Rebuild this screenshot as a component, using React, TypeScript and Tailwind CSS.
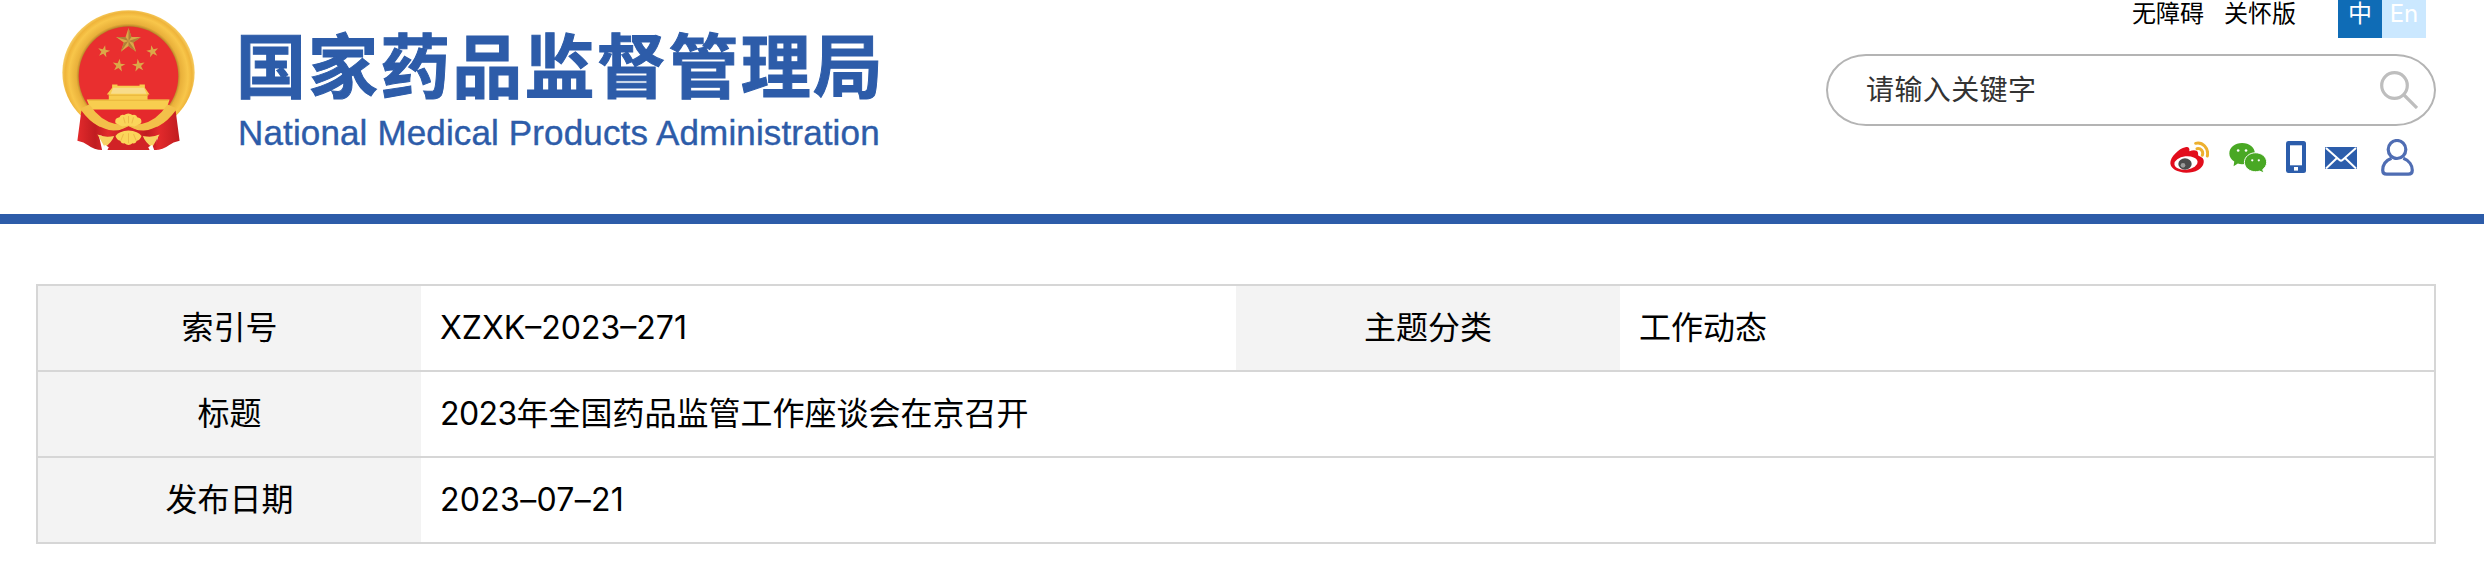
import React from "react";

const star = (cx: number, cy: number, r: number, rot = 0) =>
  Array.from({ length: 10 }, (_, i) => {
    const a = ((i * 36 - 90 + rot) * Math.PI) / 180;
    const q = i % 2 ? r * 0.38 : r;
    return `${(cx + q * Math.cos(a)).toFixed(1)},${(cy + q * Math.sin(a)).toFixed(1)}`;
  }).join(" ");

function Emblem() {
  return (
    <svg viewBox="60 20 410 440" className="mt-[7px] h-[147px] w-[137px] shrink-0" aria-hidden="true">
      <defs>
        <radialGradient id="gold" cx="265" cy="226" r="198" gradientUnits="userSpaceOnUse">
          <stop offset="0.74" stopColor="#b07c26" />
          <stop offset="0.79" stopColor="#e9b03a" />
          <stop offset="0.9" stopColor="#f8c64a" />
          <stop offset="0.96" stopColor="#efb43a" />
          <stop offset="1" stopColor="#f5c95c" />
        </radialGradient>
        <linearGradient id="drape" x1="0" x2="1">
          <stop offset="0" stopColor="#e32a2c" />
          <stop offset="0.35" stopColor="#c01c20" />
          <stop offset="0.6" stopColor="#e32a2c" />
          <stop offset="1" stopColor="#c01c20" />
        </linearGradient>
      </defs>
      <ellipse cx="265" cy="216" rx="198" ry="186" fill="url(#gold)" />
      <circle cx="265" cy="227" r="149" fill="#e92f2f" />
      <g fill="#dba848">
        <polygon points={star(265, 122, 39)} />
        <polygon points={star(191, 153, 19, 12)} />
        <polygon points={star(337, 153, 19, -12)} />
        <polygon points={star(236, 195, 20, 8)} />
        <polygon points={star(295, 195, 20, -8)} />
      </g>
      <g fill="#b07f38">
        <polygon points="265,122 265,83 274,110" />
        <polygon points="265,122 302,110 279,127" />
        <polygon points="265,122 288,154 265,137" />
        <polygon points="265,122 242,154 251,127" />
        <polygon points="265,122 228,110 256,110" />
      </g>
      <path d="M216 252h16v4h66v-4h16v10l14 20h-6v15h66l-10 30H152l-12-30h66v-15h-6l16-20z" fill="#f8cd4f" />
      <path d="M219 262h92l8 18H212z" fill="#f8dc8a" />
      <path d="M206 284h118M146 299h238" stroke="#e8b53c" strokeWidth="3" />
      <path d="M150 328h230q-38 50-115 50t-115-50z" fill="#e5292c" />
      <path d="M180 378h170v70H196z" fill="#d12226" />
      <path d="M124 330l-12 90q20 4 32 14 18 14 42 14l-10-44q40 10 89-12-90 10-141-62z" fill="url(#drape)" />
      <path d="M406 330l12 90q-20 4-32 14-18 14-42 14l10-44q-40 10-89-12 90 10 141-62z" fill="url(#drape)" />
      <path d="M124 322q40 62 96 68 30 0 45-12 15 12 45 12 56-6 96-68l-24-10q-34 50-78 58-26 2-39 0-13 2-39 0-44-8-78-58z" fill="#f3c04a" />
      <path d="M172 402q22 10 50 4-6 18-28 34zM358 402q-22 10-50 4 6 18 28 34z" fill="#f7d263" />
      <path d="M188 448l6-16 12 8-4 8zM342 448l-6-16-12 8 4 8z" fill="#fff" />
      <path d="M226 368q-4-16 12-18 2-10 14-7 12-9 25 0 12-3 14 7 16 2 12 18l-20 10-18-3-18 3z" fill="#fbd55a" />
      <path d="M240 388l25-11 25 11-25 8z" fill="#d82529" />
      <path d="M226 406q10-14 39-16 29 2 39 16-4 12-14 14-4 10-13 8-12 10-24 0-9 2-13-8-10-2-14-14z" fill="#fbd55a" />
      <path d="M265 398v30M250 400l-8 20M280 400l8 20M265 346v22M250 350l5 18M280 350l-5 18" stroke="#edbb48" strokeWidth="3" />
    </svg>
  );
}

function WeiboIcon() {
  return (
    <svg viewBox="60 48 117 99" className="mt-[2px] h-[33px] w-[39px]" aria-hidden="true">
      <path d="M106 67c9-3 14 2 12 12 12-5 24-4 26 4 1 4-1 8 3 10 11 4 16 10 14 20-3 18-24 30-52 30-27 0-47-12-48-28-1-18 26-45 45-48z" fill="#e20d1c" />
      <ellipse cx="108" cy="114" rx="35" ry="20" transform="rotate(-6 108 114)" fill="#fff" />
      <ellipse cx="105" cy="117" rx="20" ry="17" fill="#4b4b4b" />
      <circle cx="99" cy="121" r="7" fill="#9b9b9b" />
      <path d="M137 55c20-5 40 14 35 38M141 71c12-2 20 8 16 20" fill="none" stroke="#edb02f" strokeWidth="9" strokeLinecap="round" />
    </svg>
  );
}

function WechatIcon() {
  return (
    <svg viewBox="236 50 116 96" className="ml-[20px] mt-[3px] h-[32px] w-[38px]" aria-hidden="true">
      <path d="M276 52c22 0 39 13 39 32 0 19-17 33-39 33-5 0-9-1-13-2l-13 8 2-14c-9-6-15-15-15-25 0-19 17-32 39-32z" fill="#49a824" />
      <path d="M317 82c19 0 34 13 34 29 0 9-5 17-12 22l3 11-12-6c-4 1-8 2-13 2-19 0-34-13-34-29s15-29 34-29z" fill="#49a824" stroke="#fff" strokeWidth="3" />
      <g fill="#fff">
        <circle cx="264" cy="75" r="4" />
        <circle cx="288" cy="75" r="4" />
        <circle cx="307" cy="105" r="3.5" />
        <circle cx="327" cy="105" r="3.5" />
      </g>
    </svg>
  );
}

function PhoneIcon() {
  return (
    <svg viewBox="0 0 20 32" className="ml-[19px] mt-[2px] h-[32px] w-[20px]" aria-hidden="true">
      <rect width="20" height="32" rx="2.5" fill="#2c5dab" />
      <rect x="4" y="4.3" width="12" height="20" fill="#fff" />
      <rect x="8" y="26" width="4" height="3.6" fill="#fff" />
    </svg>
  );
}

function MailIcon() {
  return (
    <svg viewBox="0 0 32 22" className="ml-[19px] mt-[8px] h-[22px] w-[32px]" aria-hidden="true">
      <rect width="32" height="22" rx="1" fill="#2c5dab" />
      <path d="M1 1l13.5 12q1.5 1.3 3 0L31 1M1 21.5l11-10.5M31 21.5L20 11" fill="none" stroke="#fff" strokeWidth="2" />
    </svg>
  );
}

function UserIcon() {
  return (
    <svg viewBox="0 0 33 37" className="ml-[24px] h-[37px] w-[33px]" fill="none" stroke="#4f6db3" strokeWidth="3.2" aria-hidden="true">
      <ellipse cx="16" cy="10.5" rx="8.8" ry="9" />
      <path d="M10.5 19.2C4.5 21.5 1.7 26.5 1.7 31.2q0 3.9 4 3.9h21.6q4 0 4-3.9c0-4.7-3-9.7-9-12" />
    </svg>
  );
}

const labelCell = "flex items-center justify-center bg-[#f3f3f3]";
const valueCell = "flex items-center pl-[19px]";
const latin = "font-['Inter',sans-serif] text-[32px]";

export default function App() {
  return (
    <div className="h-[580px] w-[2484px] overflow-hidden bg-white font-['Liberation_Sans','Noto_Sans_CJK_SC',sans-serif] text-black">
      <header className="flex h-[224px] items-start border-b-[10px] border-[#2d5ca9] pl-[60px] pr-[48px]">
        <Emblem />
        <div className="ml-[41px] flex flex-col whitespace-nowrap text-[#2d5ca9]">
          <h1 className="-ml-[2px] mt-[24px] font-['Noto_Sans_CJK_SC',sans-serif] text-[70px] leading-[78px] font-bold tracking-[2.1px] [-webkit-text-stroke:1px_#2d5ca9]">国家药品监督管理局</h1>
          <p className="mt-[11px] text-[35px] leading-[40px] tracking-[0.14px] [-webkit-text-stroke:0.4px_#2d5ca9]">National Medical Products Administration</p>
        </div>
        <div className="ml-auto flex w-[610px] flex-col">
          <div className="flex h-[38px] justify-end pr-[10px] text-[24px] leading-[28px]">
            <a className="mr-[20px]">无障碍</a>
            <a className="mr-[42px]">关怀版</a>
            <a className="w-[44px] bg-[#0f6cb6] text-center text-white">中</a>
            <a className="w-[44px] bg-[#cbe8ff] text-center font-['Inter',sans-serif] text-white">En</a>
          </div>
          <div className="mt-4 flex h-[72px] items-center justify-between rounded-[40px/36px] border-2 border-[#b4b4b4] pl-[38px] pr-[16px]">
            <span className="pt-[2px] text-[28px] leading-[40px] tracking-[0.4px] text-[#333]">请输入关键字</span>
            <svg viewBox="0 0 38 38" className="h-[38px] w-[38px]" fill="none" stroke="#bebebe" strokeWidth="3.2" aria-hidden="true">
              <circle cx="14.5" cy="14.5" r="12.8" />
              <path d="M24 24l13 13" />
            </svg>
          </div>
          <div className="mt-[13px] flex items-start justify-end pr-[22px]">
            <WeiboIcon />
            <WechatIcon />
            <PhoneIcon />
            <MailIcon />
            <UserIcon />
          </div>
        </div>
      </header>

      <main className="mt-[60px] ml-[36px] w-[2400px] border-2 border-[#d6d6d6] text-[32px] leading-[48px]">
        <div className="grid h-[86px] grid-cols-[383px_815px_384px_1fr] border-b-2 border-[#d6d6d6]">
          <div className={labelCell}>索引号</div>
          <div className={valueCell}><span className={latin}>XZXK–2023–271</span></div>
          <div className={labelCell}>主题分类</div>
          <div className={valueCell}>工作动态</div>
        </div>
        <div className="grid h-[86px] grid-cols-[383px_1fr] border-b-2 border-[#d6d6d6]">
          <div className={labelCell}>标题</div>
          <div className={valueCell}>
            <span><span className="font-['Inter',sans-serif] text-[32px] tracking-[-0.6px]">2023</span>年全国药品监管工作座谈会在京召开</span>
          </div>
        </div>
        <div className="grid h-[84px] grid-cols-[383px_1fr]">
          <div className={labelCell}>发布日期</div>
          <div className={valueCell}><span className="font-['Inter',sans-serif] text-[32px] tracking-[0.3px]">2023–07–21</span></div>
        </div>
      </main>
    </div>
  );
}
